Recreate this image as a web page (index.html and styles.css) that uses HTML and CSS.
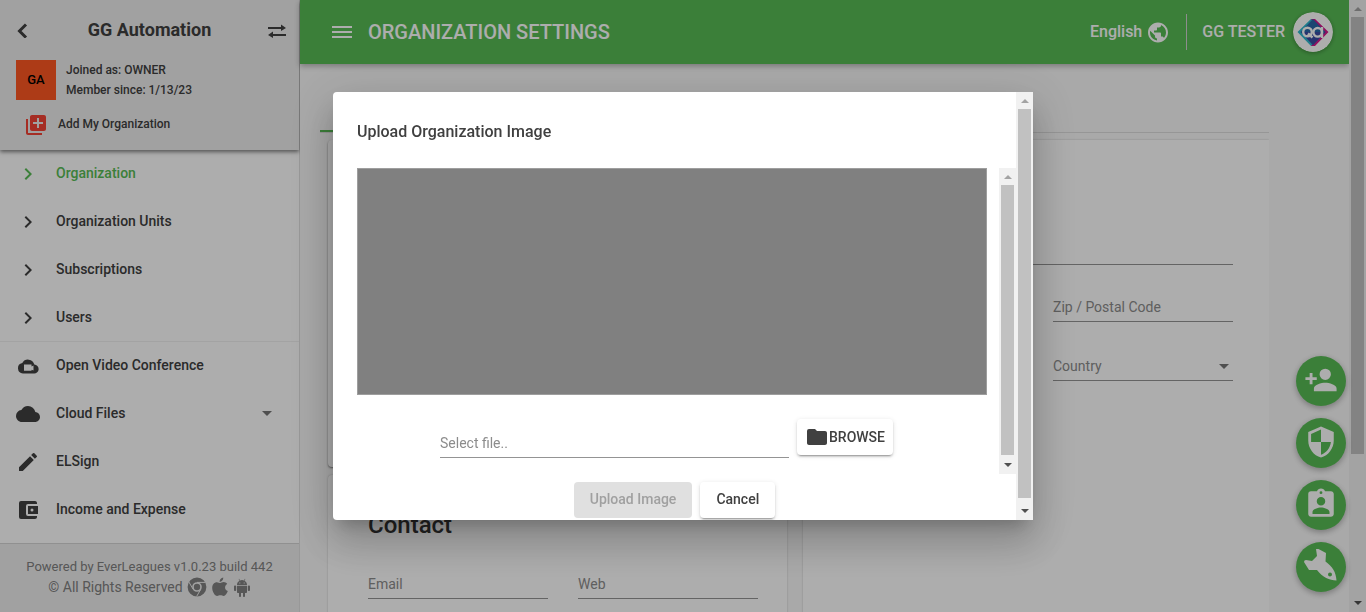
FILE: index.html
```html
<!DOCTYPE html>
<html lang="en">
<head>
<meta charset="utf-8">
<title>Organization Settings</title>
<meta name="viewport" content="width=device-width, initial-scale=1">
<link rel="stylesheet" href="styles.css">
</head>
<body>
<div class="app">
  <aside class="sidebar">
    <header class="side-head">
      <div class="side-title">
        <button class="icon-btn" aria-label="Back"><svg width="12" height="16" viewBox="0 0 12 16"><path d="M10 2.500 3.500 9 10 15.500" fill="none" stroke="currentColor" stroke-width="3"/></svg></button>
        <h2>GG Automation</h2>
        <button class="icon-btn" aria-label="Switch organization"><svg width="20" height="16" viewBox="0 0 20 16" fill="currentColor"><path d="M1 5h13V2.500L19 6l-5 3V7H1zM19 12H6V9.500L1 13l5 3v-2h13z"/></svg></button>
      </div>
      <div class="member">
        <div class="badge">GA</div>
        <div><p>Joined as: OWNER</p><p>Member since: 1/13/23</p></div>
      </div>
      <a class="add-org" href="#"><svg width="24" height="24" viewBox="0 0 24 24" fill="currentColor"><path d="M4 6H2v14c0 1.100.9 2 2 2h14v-2H4zm16-4H8c-1.100 0-2 .9-2 2v12c0 1.100.9 2 2 2h12c1.100 0 2-.9 2-2V4c0-1.100-.9-2-2-2zm-1 9h-4v4h-2v-4H9V9h4V5h2v4h4z"/></svg><span>Add My Organization</span></a>
    </header>
    <nav class="side-nav">
      <div class="nav-group">
        <a class="nav-item active" href="#"><svg viewBox="0 0 24 24"><path d="M10 6 8.600 7.400l4.600 4.600-4.600 4.600L10 18l6-6z"/></svg><span>Organization</span></a>
        <a class="nav-item" href="#"><svg viewBox="0 0 24 24"><path d="M10 6 8.600 7.400l4.600 4.600-4.600 4.600L10 18l6-6z"/></svg><span>Organization Units</span></a>
        <a class="nav-item" href="#"><svg viewBox="0 0 24 24"><path d="M10 6 8.600 7.400l4.600 4.600-4.600 4.600L10 18l6-6z"/></svg><span>Subscriptions</span></a>
        <a class="nav-item" href="#"><svg viewBox="0 0 24 24"><path d="M10 6 8.600 7.400l4.600 4.600-4.600 4.600L10 18l6-6z"/></svg><span>Users</span></a>
      </div>
      <div class="nav-group">
        <a class="nav-item" href="#"><svg viewBox="0 0 24 24"><path fill-rule="evenodd" d="M18.300 10.500A6.500 6.500 0 0 0 6.300 9 5.300 5.300 0 0 0 7 19.500h11a4.500 4.500 0 0 0 .3-9zM8 10.500h7.500v2l2-1v5l-2-.8v1H8z"/></svg><span>Open Video Conference</span></a>
        <a class="nav-item" href="#"><svg viewBox="0 0 24 24"><path d="M19.350 10.040A7.490 7.490 0 0 0 12 4C9.110 4 6.600 5.640 5.350 8.040A5.994 5.994 0 0 0 0 14c0 3.310 2.690 6 6 6h13c2.760 0 5-2.240 5-5 0-2.640-2.050-4.780-4.650-4.960z"/></svg><span>Cloud Files</span><i class="caret"></i></a>
        <a class="nav-item" href="#"><svg viewBox="0 0 24 24"><path d="M3 17.250V21h3.750L17.810 9.940l-3.750-3.750zM20.710 7.040a1 1 0 0 0 0-1.410l-2.340-2.340a1 1 0 0 0-1.410 0l-1.830 1.830 3.750 3.750z"/></svg><span>ELSign</span></a>
        <a class="nav-item" href="#"><svg viewBox="0 0 24 24"><path d="M21 18v1c0 1.100-.9 2-2 2H5a2 2 0 0 1-2-2V5a2 2 0 0 1 2-2h14c1.100 0 2 .9 2 2v1h-9a2 2 0 0 0-2 2v8a2 2 0 0 0 2 2zm-9-2h10V8H12zm4-2.500a1.500 1.500 0 1 1 0-3 1.500 1.500 0 0 1 0 3z"/></svg><span>Income and Expense</span></a>
      </div>
    </nav>
    <footer class="side-foot">
      <p class="version">Powered by EverLeagues v1.0.23 build 442</p>
      <p class="rights"><span>© All Rights Reserved</span>
        <svg width="20" height="20" viewBox="0 0 20 20" fill="none" stroke="currentColor"><circle cx="10" cy="10" r="7.100" stroke-width="4.600"/><circle cx="10" cy="10" r="3.200" fill="currentColor" stroke="none"/><path class="cut" d="M10 5.400h8.500M6.100 12.200 1.900 5M13.800 12.200 9.600 19.500"/></svg>
        <svg width="18" height="20" viewBox="0 0 18 20" fill="currentColor"><path d="M12.300.5c.1 2.400-1.500 4.300-3.700 4.400C8.400 2.700 10.200.8 12.300.5zM9.200 6c.8 0 1.800-1 3.500-1 1.300 0 2.700.7 3.500 1.900-3.200 1.900-2.600 6 .6 7.200-.8 2.200-2.300 4.900-4.200 4.900-1.200 0-1.600-.7-3.200-.7s-2.100.7-3.200.7C3.800 19 1.200 14.500 1.200 11c0-3.700 2.300-5.800 4.600-5.800C7.300 5.200 8.500 6 9.200 6z"/></svg>
        <svg width="18" height="20" viewBox="0 0 18 20" fill="currentColor"><path fill-rule="evenodd" d="M4 8C4 5.800 5.200 4.400 6.500 3.700L5.600 2l.5-.3L7 3.400a6 6 0 0 1 4 0L11.900 1.700l.5.3-.9 1.700C12.800 4.400 14 5.800 14 8zM6.300 5.600h1v1h-1zm4.400 0h1v1h-1zM4 8.700h10V15c0 .7-.4 1-1 1h-1v3c0 1.300-2 1.300-2 0v-3H8v3c0 1.300-2 1.300-2 0v-3H5c-.6 0-1-.3-1-1zM1 9.500c0-1.300 2.200-1.300 2.200 0V13c0 1.300-2.200 1.300-2.200 0zm13.800 0c0-1.300 2.200-1.300 2.200 0V13c0 1.300-2.200 1.300-2.200 0z"/></svg>
      </p>
    </footer>
  </aside>

  <main class="main">
    <header class="toolbar">
      <button class="icon-btn" aria-label="Menu"><svg width="20" height="14" viewBox="0 0 20 14" fill="currentColor"><path d="M0 1h20v2H0zM0 6h20v2H0zM0 11h20v2H0z"/></svg></button>
      <h1>ORGANIZATION SETTINGS</h1>
      <button class="lang"><span>English</span><svg width="24" height="24" viewBox="0 0 24 24" fill="currentColor"><path d="M12 2.500C6.480 2.500 2 6.980 2 12.500s4.480 10 10 10 10-4.480 10-10-4.480-10-10-10zm-1 17.930c-3.950-.49-7-3.850-7-7.930 0-.62.08-1.210.21-1.790L9 15.500v1c0 1.100.9 2 2 2v1.930zm6.900-2.540c-.26-.81-1-1.390-1.900-1.390h-1v-3c0-.55-.45-1-1-1H8v-2h2c.55 0 1-.45 1-1v-2h2c1.100 0 2-.9 2-2v-.41c2.930 1.190 5 4.060 5 7.400 0 2.080-.8 3.970-2.100 5.390z"/></svg></button>
      <button class="user"><span>GG TESTER</span>
        <svg class="avatar" width="40" height="40" viewBox="0 0 40 40"><circle cx="20" cy="20" r="20" fill="#fff"/><path d="M18 7h4L8 20l14 14h-4L4.500 20z" fill="#2fb9cf"/><path d="M18 7h4l13.500 13L22 34h-4l13-14z" fill="#d4148c"/><path d="M20 7 7.500 20 20 33l12.500-13z" fill="#2868a8"/><path d="M20 20h12.500L20 33 8 20z" fill="#3b4ba4"/><g fill="none" stroke="#fff" stroke-width="2.400"><circle cx="14.500" cy="20" r="4.300"/><path d="m15 21.500 4.500 4M29 15v11"/><circle cx="24.700" cy="20.300" r="4.300"/></g></svg></button>
    </header>
    <div class="content">
      <div class="tabs"><span class="ink"></span></div>
      <div class="columns">
        <div class="column">
          <section class="card image-card"></section>
          <section class="card contact">
            <h3>Contact</h3>
            <div class="fields"><input class="field" aria-label="Email" placeholder="Email"><input class="field" aria-label="Web" placeholder="Web"></div>
          </section>
        </div>
        <section class="card address">
          <input class="field" aria-label="Address">
          <div class="fields"><input class="field" aria-label="City"><input class="field" aria-label="Zip / Postal Code" placeholder="Zip / Postal Code"></div>
          <div class="fields"><input class="field" aria-label="State"><div class="select-wrap"><select class="field" aria-label="Country"><option>Country</option></select><i class="caret"></i></div></div>
        </section>
      </div>
    </div>
  </main>

  <div class="scrollbar page-bar" aria-hidden="true"><i class="up"></i><b></b><i class="down"></i></div>
</div>

<div class="fabs">
  <button aria-label="Add user"><svg viewBox="0 0 24 24"><path d="M15 12a4 4 0 1 0 0-8 4 4 0 0 0 0 8zm-9-2V7H4v3H1v2h3v3h2v-3h3v-2zm9 4c-2.670 0-8 1.340-8 4v2h16v-2c0-2.660-5.330-4-8-4z"/></svg></button>
  <button aria-label="Security"><svg viewBox="0 0 24 24"><path fill-rule="evenodd" d="M12 1 3 5v6c0 5.550 3.840 10.740 9 12 5.160-1.260 9-6.450 9-12V5zm0 11h7c-.53 4.120-3.280 7.790-7 8.940V12H5V6.300l7-3.110z"/></svg></button>
  <button aria-label="Assignments"><svg viewBox="0 0 24 24"><path fill-rule="evenodd" d="M19 3h-4.180a3 3 0 0 0-5.640 0H5a2 2 0 0 0-2 2v14c0 1.100.9 2 2 2h14c1.100 0 2-.9 2-2V5c0-1.100-.9-2-2-2zm-7 0a1 1 0 1 1 0 2 1 1 0 0 1 0-2zm0 4a3 3 0 1 1 0 6 3 3 0 0 1 0-6zm6 12H6v-1.400c0-2 4-3.100 6-3.100s6 1.100 6 3.100z"/></svg></button>
  <button aria-label="Launch"><svg viewBox="0 0 34 34"><path fill-rule="evenodd" d="M12 0q1-1 2.500 0l7.500 4-.5 8.500c7 5 10.500 10.500 11 19-7-.5-14-3-19.500-10.500H5L0 13q0-2 2-2l6 1 5-5zM26 23.500a2 2 0 1 0 0 4 2 2 0 0 0 0-4z"/></svg></button>
</div>

<div class="backdrop">
  <div class="dialog" role="dialog" aria-modal="true" aria-labelledby="dialog-title">
    <div class="dialog-body">
      <h2 id="dialog-title">Upload Organization Image</h2>
      <div class="scroll-area">
        <div class="scroll-content">
          <div class="preview"></div>
          <div class="file-row">
            <input class="field" aria-label="Select file" placeholder="Select file..">
            <button class="btn browse"><svg width="24" height="24" viewBox="0 0 24 24" fill="currentColor"><path d="M10 4H4a2 2 0 0 0-2 2v12c0 1.100.9 2 2 2h16c1.100 0 2-.9 2-2V8c0-1.100-.9-2-2-2h-8z"/></svg><span>BROWSE</span></button>
          </div>
        </div>
        <div class="scrollbar" aria-hidden="true"><i class="up"></i><b></b><i class="down"></i></div>
      </div>
      <div class="actions"><button class="btn" disabled>Upload Image</button><button class="btn">Cancel</button></div>
    </div>
    <div class="scrollbar dialog-bar" aria-hidden="true"><i class="up"></i><b></b><i class="down"></i></div>
  </div>
</div>
</body>
</html>
```
FILE: styles.css
```css
* { box-sizing: border-box; }
body { margin: 0; font: 400 14px/20px Roboto, sans-serif; color: #404040; }
h1, h2, h3, p { margin: 0; }
button, input, select { font: inherit; color: inherit; }
button { border: 0; background: none; padding: 0; cursor: pointer; }
a { color: inherit; text-decoration: none; }
svg { display: block; flex: none; }

.app { display: grid; grid-template-columns: 300px minmax(0, 1fr) 17px; grid-template-rows: minmax(0, 1fr); height: 100vh; overflow: hidden; }

/* Sidebar */
.sidebar { display: flex; flex-direction: column; background: #fff; border-right: 1px solid #e0e0e0; }
.side-head { height: 150px; flex: none; background: #eee; box-shadow: 0 2px 4px rgba(0,0,0,.5); padding: 16px 0 0 16px; }
.side-title { display: flex; align-items: center; justify-content: space-between; padding-right: 12px; height: 28px; }
.side-title h2 { font: 700 18px/28px Roboto, sans-serif; padding-left: 4px; }
.icon-btn { display: flex; }
.member { display: flex; gap: 10px; margin-top: 16px; font-weight: 500; font-size: 12px; }
.badge { width: 40px; height: 40px; background: #ff5722; color: #000; font-size: 13px; line-height: 40px; text-align: center; }
.add-org { display: flex; align-items: center; gap: 10px; margin: 13px 0 0 8px; font-weight: 500; font-size: 12px; }
.add-org svg { color: #f44336; }
.add-org span { padding-bottom: 2px; }
.side-nav { font-weight: 500; }
.nav-group + .nav-group { border-top: 1px solid #f0f0f0; margin-top: -1px; }
.nav-item { display: flex; align-items: center; gap: 16px; height: 48px; padding: 0 27px 2px 16px; }
.nav-item svg { width: 24px; height: 24px; fill: currentColor; margin-top: 2px; }
.nav-item.active { color: #58bc55; }
.nav-item .caret { margin-left: auto; }
.caret { border: 5px solid transparent; border-top-color: #757575; border-bottom: 0; }
.side-foot { margin-top: auto; padding: 13px 0 15px; border-top: 1px solid #d4d4d4; background: #eee; color: #808080; text-align: center; }
.version { font-size: 13px; }
.rights { display: flex; justify-content: center; gap: 4px; }
.cut { stroke: #eee; stroke-width: 1; }

/* Main area */
.main { display: flex; flex-direction: column; min-width: 0; background: #fafafa; }
.toolbar { display: flex; align-items: center; height: 64px; flex: none; padding: 0 16px 0 32px; background: #58bc55; color: #fff; box-shadow: 0 2px 6px rgba(0,0,0,.3); }
.toolbar h1 { margin: 0 auto 0 16px; font: 500 20px/24px Roboto, sans-serif; }
.lang, .user { display: flex; align-items: center; font-weight: 500; font-size: 16px; }
.lang { gap: 4px; padding-right: 16px; height: 36px; border-right: 1px solid #d0d0d0; }
.user { gap: 8px; padding-left: 15px; }
.avatar { border-radius: 50%; box-shadow: 0 1px 4px rgba(0,0,0,.3); }
.content { flex: 1; min-height: 0; overflow: hidden; padding: 0 80px 0 20px; }
.tabs { height: 69px; border-bottom: 1px solid #dedede; display: flex; align-items: flex-end; }
.ink { width: 160px; height: 2px; background: #58bc55; }
.columns { display: grid; grid-template-columns: 459px minmax(0, 1fr); gap: 16px; padding: 7px 0 0 8px; overflow: hidden; }
.column { display: flex; flex-direction: column; gap: 8px; }
.card { background: #fff; border-radius: 4px; box-shadow: 0 0 2px rgba(0,0,0,.25); }
.image-card { height: 327px; box-shadow: 0 1px 2px rgba(0,0,0,.5); }
.contact { height: 300px; padding: 36px 29px 0 40px; }
.contact h3 { font: 500 24px/28px Roboto, sans-serif; margin-bottom: 30px; color: #333; }
.fields { display: grid; grid-template-columns: 1fr 1fr; gap: 30px; }
.address { display: flex; flex-direction: column; gap: 29px; padding: 95px 36px 0 40px; border-radius: 4px 0 0 4px; }
.address > .field { margin-bottom: -2px; }
.field { display: block; width: 100%; min-width: 0; height: 30px; padding: 0; border: 0; border-bottom: 1px solid #949494; border-radius: 0; background: none; outline: 0; appearance: none; color: #8c8c8c; }
.field::placeholder { color: #8c8c8c; opacity: 1; }
.select-wrap { display: grid; align-items: center; }
.select-wrap > * { grid-area: 1 / 1; }
.select-wrap .caret { justify-self: end; margin-right: 4px; }

/* Floating actions */
.fabs { position: fixed; right: 20px; bottom: 20px; display: grid; gap: 12px; }
.fabs button { width: 50px; height: 50px; border-radius: 50%; background: #58bc55; display: grid; place-items: center; box-shadow: 0 2px 6px rgba(0,0,0,.3); }
.fabs svg { width: 34px; height: 34px; fill: #fff; margin-bottom: 2px; }

/* Scrollbars */
.scrollbar { display: flex; flex-direction: column; align-items: center; justify-content: space-between; width: 17px; flex: none; background: #f1f1f1; padding: 7px 0; }
.scrollbar b { width: 13px; flex: 1; margin: 6px 0 8px; background: #c1c1c1; }
.scrollbar i { border: 4px solid transparent; }
.scrollbar .up { border-top: 0; border-bottom-color: #a3a3a3; }
.scrollbar .down { border-bottom: 0; border-top-color: #505050; }
.page-bar b { flex: 0 1 73%; margin-bottom: auto; }
.dialog-bar b { margin-bottom: 11px; }

/* Dialog */
.backdrop { position: fixed; inset: 0; display: grid; place-items: center; background: rgba(0,0,0,.32); }
.dialog { display: flex; width: 700px; max-width: 80vw; max-height: 70vh; overflow: hidden; background: #fff; border-radius: 4px 0 0 4px; box-shadow: 0 11px 15px -7px rgba(0,0,0,.2), 0 24px 38px 3px rgba(0,0,0,.14), 0 9px 46px 8px rgba(0,0,0,.12); }
.dialog-body { flex: 1; min-width: 0; padding: 24px 0 2px 24px; }
.dialog h2 { font: 500 16px/32px Roboto, sans-serif; margin-bottom: 20px; }
.scroll-area { display: flex; height: 306px; }
.scroll-content { flex: 1; min-width: 0; padding-right: 12px; }
.preview { height: 227px; background: #808080; border: 1px solid #9e9e9e; }
.file-row { display: flex; align-items: flex-start; gap: 8px; padding: 24px 94px 0 83px; }
.file-row .field { flex: 1; margin-top: 9px; }
.btn { height: 36px; padding: 0 16px 2px; border-radius: 4px; background: #fff; font-weight: 500; box-shadow: 0 3px 1px -2px rgba(0,0,0,.2), 0 2px 2px rgba(0,0,0,.14), 0 1px 5px rgba(0,0,0,.12); }
.btn:disabled { background: #e0e0e0; color: #a0a0a0; box-shadow: none; }
.browse { display: flex; align-items: center; padding: 0 8px; }
.actions { display: flex; justify-content: center; gap: 8px; padding: 8px 24px 0 0; }
```
